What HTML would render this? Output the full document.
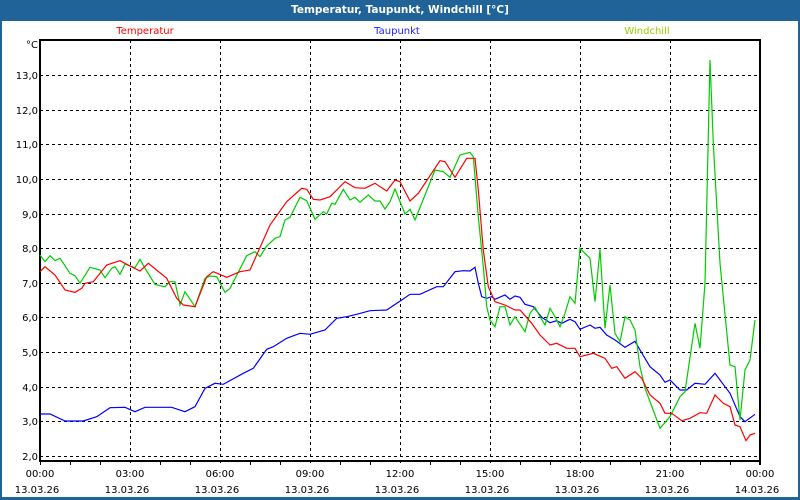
<!DOCTYPE html>
<html><head><meta charset="utf-8"><style>
html,body{margin:0;padding:0;background:#fff;}
svg{display:block;font-family:"DejaVu Sans","Liberation Sans",sans-serif;}
</style></head><body>
<svg width="800" height="500" viewBox="0 0 800 500" xmlns="http://www.w3.org/2000/svg">
<rect x="0" y="0" width="800" height="500" fill="#1f6399"/>
<rect x="2" y="21" width="796" height="476" fill="#fff"/>
<text x="400" y="13" fill="#fff" font-size="10.5" font-weight="bold" text-anchor="middle">Temperatur, Taupunkt, Windchill [°C]</text>
<text x="145" y="34" fill="#f00" font-size="10" text-anchor="middle">Temperatur</text>
<text x="397" y="34" fill="#22f" font-size="10" text-anchor="middle">Taupunkt</text>
<text x="647" y="34" fill="#9c0" font-size="10" text-anchor="middle">Windchill</text>
<g stroke="#000" stroke-width="1" stroke-dasharray="3,3" fill="none">
<path d="M40 75.5H760M40 110.5H760M40 144.5H760M40 179.5H760M40 214.5H760M40 248.5H760M40 283.5H760M40 317.5H760M40 352.5H760M40 387.5H760M40 421.5H760M40 456.5H760"/>
<path d="M130.5 40V465M220.5 40V465M310.5 40V465M400.5 40V465M490.5 40V465M580.5 40V465M670.5 40V465"/>
</g>
<g stroke="#000" stroke-width="2" fill="none">
<path d="M40 40H760V465M40 39V461H760"/>
</g>
<g stroke="#000" stroke-width="1">
<path d="M70.5 461V465M100.5 461V465M160.5 461V465M190.5 461V465M250.5 461V465M280.5 461V465M340.5 461V465M370.5 461V465M430.5 461V465M460.5 461V465M520.5 461V465M550.5 461V465M610.5 461V465M640.5 461V465M700.5 461V465M730.5 461V465M40.5 461V465"/>
</g>
<g font-size="10" fill="#000" text-anchor="end">
<text x="38" y="48">°C</text>
<text x="38" y="79">13,0</text><text x="38" y="114">12,0</text><text x="38" y="148">11,0</text>
<text x="38" y="183">10,0</text><text x="38" y="218">9,0</text><text x="38" y="252">8,0</text>
<text x="38" y="287">7,0</text><text x="38" y="321">6,0</text><text x="38" y="356">5,0</text>
<text x="38" y="391">4,0</text><text x="38" y="425">3,0</text><text x="38" y="460">2,0</text>
</g>
<g font-size="10" fill="#000" text-anchor="middle">
<text x="40" y="477">00:00</text><text x="130" y="477">03:00</text><text x="220" y="477">06:00</text><text x="310" y="477">09:00</text><text x="400" y="477">12:00</text><text x="490" y="477">15:00</text><text x="580" y="477">18:00</text><text x="670" y="477">21:00</text><text x="760" y="477">00:00</text>
<text x="37" y="493">13.03.26</text><text x="127" y="493">13.03.26</text><text x="217" y="493">13.03.26</text><text x="307" y="493">13.03.26</text><text x="397" y="493">13.03.26</text><text x="487" y="493">13.03.26</text><text x="577" y="493">13.03.26</text><text x="667" y="493">13.03.26</text><text x="757" y="493">14.03.26</text>
</g>
<g fill="none" stroke-width="1.2">
<polyline stroke="#00f" points="40,414 50,414 65,421 83.3,421 96.7,416.7 110,407.7 125,407.3 135,411.7 145,407.3 171.7,407.3 185,411.7 195,406.7 205,388.3 215,383.3 223.3,384.3 243.3,373.3 253.3,368.3 266.7,349.3 273.3,346.7 286.7,338.3 300,333.3 310,334.3 325,330 336.7,318.3 346.7,316.7 356.7,314.3 370,310.7 386.7,310 401.7,300 410,294.3 420,294.3 436.7,286.7 443.3,286.7 455,271.7 463.3,270.7 470,271 475,267.3 478.3,283.3 481.7,296.7 486.7,298.3 491.7,296.7 495,299.3 505,295 510,299.3 515,296 520,297.3 525,304.3 533.3,306.7 541.7,317.3 550,322.7 556.7,320.7 561.7,323.3 570,319.3 575,321.7 580,329.3 590,325 595,328.3 600,327.3 606.7,335 615,340 625,347.3 635,341.3 640,350 650,366.7 660,375 665,382.3 670,380 680,390 686.7,390 695,383.3 705,384.3 715,373.3 725,386.7 730,393.3 740,416.7 745,421.7 755,414.3"/>
<polyline stroke="#0c0" points="40,255 45,261.7 50,255.7 55,260.7 60,258.3 70,273.3 75,275.7 80,283.3 90,267.3 100,270 105,277.7 111.7,268.3 115,266.7 120,274.3 125,264 135,267.7 140,259.3 145,268.3 155,284.3 160,285.7 165,286.7 170,281.7 175,281.7 180,305 185,291.7 195,306.7 205,278.3 210,276 216.7,276.7 225,292.3 230,288.3 246.7,255.7 255,251.7 260,256.7 266.7,246 275,238.3 280,236.7 285,220 290,217.3 300,197.3 306.7,200.7 315,219.3 323.3,211.7 326.7,214 331.7,203.3 335,204.3 343.3,189.3 350,200 355,197.3 360,202.3 368.3,195 375,201 380,201 385,209 390,201.7 395,189 405,214 410,209.3 415,220 435,170 443.3,171.7 450,177.3 460,155 470,152.3 473.3,156.7 478.3,216.7 483.3,266.7 486.7,306.7 490,320 495,326.7 500,306.7 505,306.7 510,325 515,316.7 525,331.7 530,313.3 535,307.3 540,316.7 545,325 550,308.3 555,316.7 560,326.7 565,313.3 570,296.7 575,303.3 580,248.3 590,258.3 595,301.7 600,249.3 605,328.3 610,285 615,333.3 620,341.7 625,316.7 630,320 635,330 640,366.7 645,388.3 660,428.3 670,416.7 680,396.7 685,391.7 695,323.3 700,348.3 705,283.3 710,60 713.3,143.3 720,263.3 730,365 735,366.7 740,420 745,370 750,360 755,320"/>
<polyline stroke="#f00" points="40,271.7 45,266.7 55,275 65,290 75,292.3 81.7,288.3 85,283.3 93.3,281.7 106.7,265 120,260.7 130,266 140,271 148.3,263.3 166.7,278.3 176.7,298.3 183.3,305 195,306.7 206.7,276.7 213.3,271.7 226.7,277.3 240,271.7 250,270 270,225 286.7,201.7 301.7,188.3 306.7,189.3 313.3,199.3 320,200 330,196.7 345,181.7 355,187.7 365,188.3 375,183.3 386.7,191 395,180 400,181.7 410,201 418.3,193.3 440,160.7 445,161.7 455,177.3 466.7,158.3 475,158.3 478.3,190 483.3,250 488.3,286.7 495,301.7 505,305 515,310 520,310 531.7,323.3 540,335 550,345 556.7,343.3 566.7,348.3 575,348.3 580,356.7 593.3,353.3 605,358.3 611.7,368.3 616.7,366.7 625,378.3 635,371.7 641.7,378.3 650,395 660,403.3 665,413.3 671.7,413.3 681.7,420.7 690,418.3 700,412.7 706.7,413.3 715,395 723.3,403.3 730,406.7 735,425 740,426.7 746,440.7 750,435 755,433.3"/>
</g>
</svg>
</body></html>
